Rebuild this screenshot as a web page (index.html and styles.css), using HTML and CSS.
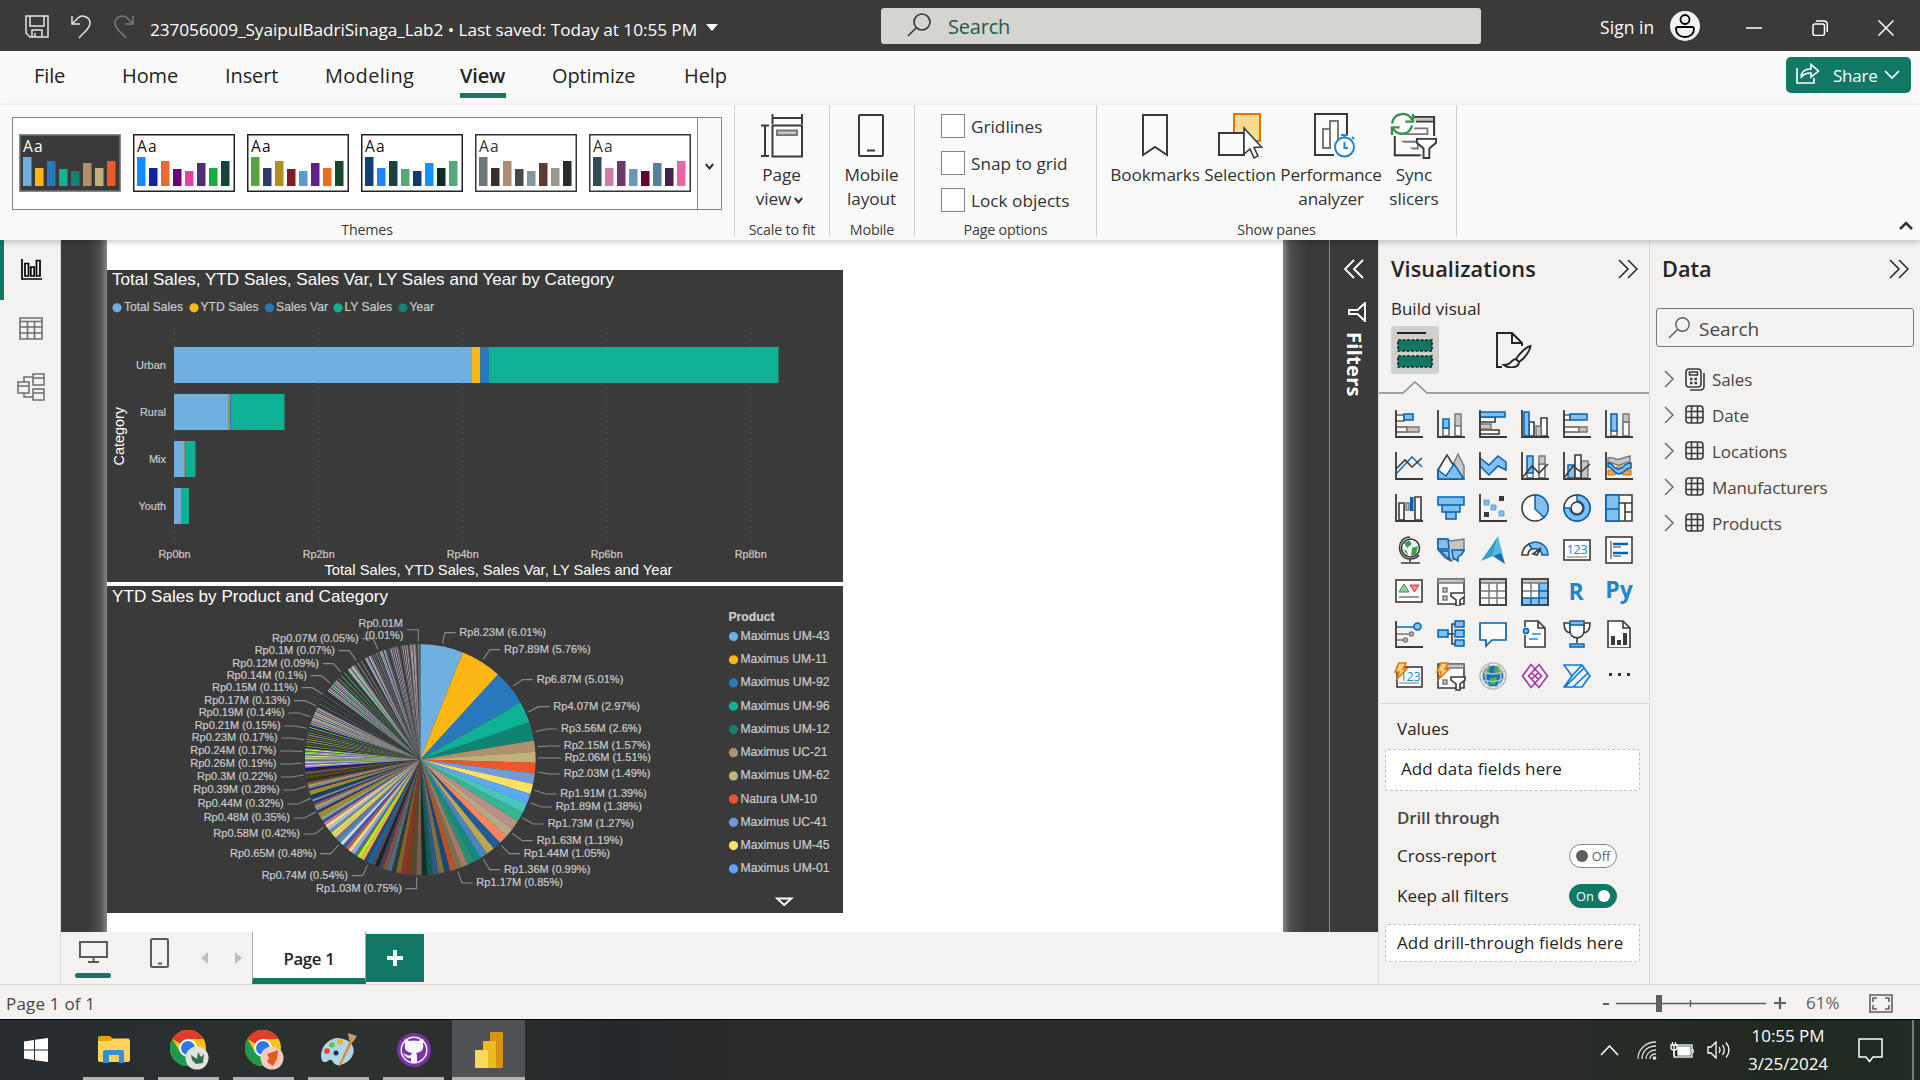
FILE: index.html
```html
<!DOCTYPE html>
<html lang="en">
<head>
<meta charset="utf-8">
<title>237056009_SyaipulBadriSinaga_Lab2</title>
<link rel="stylesheet" href="styles.css">
</head>
<body>
<div class="app">
  <header class="titlebar">
    <div class="quick">
      <svg width="24" height="24" viewBox="0 0 24 24" class="ln"><path d="M1 1H23V22H5L1 18Z M5 1V11H19V1 M7 22V15H17V22 M10 18V22"/></svg>
      <svg width="22" height="24" viewBox="0 0 22 24" class="ln"><path d="M2 1V9H10 M2 9L8 3C12-1 20 2 20 8C20 14 14 17 9 23"/></svg>
      <svg width="22" height="24" viewBox="0 0 22 24" class="ln dim"><path d="M20 1V9H12 M20 9L14 3C10-1 2 2 2 8C2 14 8 17 13 23"/></svg>
    </div>
    <div class="doc">237056009_SyaipulBadriSinaga_Lab2 • Last saved: Today at 10:55 PM</div>
    <svg class="doc-caret" width="12" height="8" viewBox="0 0 12 8"><path d="M0 0H12L6 7Z" fill="#fff"/></svg>
    <div class="top-search">
      <svg width="24" height="24" viewBox="0 0 24 24" fill="none" stroke="#3b3a39" stroke-width="1.7"><circle cx="15" cy="9" r="8"/><path d="M9.5 14.5L1 23"/></svg>
      <span>Search</span>
    </div>
    <div class="signin">Sign in</div>
    <svg class="avatar" width="30" height="30" viewBox="0 0 30 30"><circle cx="15" cy="15" r="15" fill="#f3f2f1"/><g fill="none" stroke="#000" stroke-width="1.8"><circle cx="15" cy="8.500" r="4.500"/><path d="M6 18C6 16.500 7 16 8 16H22C23 16 24 16.500 24 18C24 23 20 26 15 26C10 26 6 23 6 18Z"/></g></svg>
    <div class="winbtns">
      <svg width="16" height="16" viewBox="0 0 16 16" class="wn"><path d="M0 8H16"/></svg>
      <svg width="16" height="16" viewBox="0 0 16 16" class="wn"><rect x="1" y="4" width="11.500" height="11.500" rx="2"/><path d="M4 1H11.500C14 1 15.300 2.300 15.300 4.500V12"/></svg>
      <svg width="16" height="16" viewBox="0 0 16 16" class="wn"><path d="M.5 .5L15.500 15.500M15.500 .5L.5 15.500"/></svg>
    </div>
  </header>

  <nav class="tabs">
    <span class="tab t-file">File</span><span class="tab t-home">Home</span><span class="tab t-ins">Insert</span><span class="tab t-mod">Modeling</span><span class="tab t-view">View</span><span class="tab t-opt">Optimize</span><span class="tab t-help">Help</span>
    <button class="share"><svg width="24" height="21" viewBox="0 0 24 21" fill="none" stroke="#fff" stroke-width="1.600"><path d="M1 5V20H18V15 M5 15C5 9 9 6 15 6V1.500L22.500 8L15 14V10C10 10 7 11 5 15Z"/></svg><span>Share</span><svg width="16" height="10" viewBox="0 0 16 10" fill="none" stroke="#fff" stroke-width="1.700"><path d="M1 1L8 8L15 1"/></svg></button>
  </nav>

  <section class="ribbon">
    <div class="grp g-themes">
      <div class="gallery" id="gallery"><div class="thumbs" id="thumbs"></div><div class="more"><svg width="9" height="7" viewBox="0 0 9 7" fill="none" stroke="#333" stroke-width="2"><path d="M.8 1L4.500 5.500L8.200 1"/></svg></div></div>
      <div class="cap">Themes</div>
    </div>
    <div class="grp g-scale">
      <div class="cmd"><svg width="42" height="44" viewBox="0 0 42 44" class="ic"><path d="M11.500 0V10M41 0V10M11 4H41M0 11.500H8M0 42H8M4 12V42"/><rect x="11.500" y="11.500" width="29.500" height="31"/><rect x="16" y="16.500" width="20" height="4.500" fill="#c8c6c4" stroke="#797775"/></svg><span>Page</span><span class="l2">view<svg class="vv" width="9" height="7" viewBox="0 0 9 7" fill="none" stroke="#333" stroke-width="2"><path d="M.8 1L4.500 5.500L8.200 1"/></svg></span></div>
      <div class="cap">Scale to fit</div>
    </div>
    <div class="grp g-mobile">
      <div class="cmd"><svg width="26" height="44" viewBox="0 0 26 44" class="ic"><rect x="1" y="1" width="24" height="41" rx="1"/><path d="M9 36.500H17"/></svg><span>Mobile</span><span>layout</span></div>
      <div class="cap">Mobile</div>
    </div>
    <div class="grp g-opts">
      <div class="checks"><label><i></i>Gridlines</label><label><i></i>Snap to grid</label><label><i></i>Lock objects</label></div>
      <div class="cap">Page options</div>
    </div>
    <div class="grp g-panes">
      <div class="cmds">
        <div class="cmd c1"><svg width="26" height="44" viewBox="0 0 26 44" class="ic"><path d="M1 1H25V41L13 33L1 41Z"/></svg><span>Bookmarks</span></div>
        <div class="cmd c2"><svg width="44" height="46" viewBox="0 0 44 46" class="ic"><rect x="16" y="1" width="26" height="27" fill="#f8db8f" stroke="#e3730c"/><rect x="1" y="20" width="25" height="22"/><path d="M26 15V41L32 36L36 45L40 43L36 34.500L43.500 34Z" fill="#fff" stroke-width="1.600"/></svg><span>Selection</span></div>
        <div class="cmd c3"><svg width="42" height="46" viewBox="0 0 42 46" class="ic"><path d="M20 42H1V1H33V21"/><path d="M9 35V16H16V35ZM16 34V8H24V28" stroke="#797775"/><circle cx="30.500" cy="34" r="9.500" stroke="#1f86cf"/><path d="M27 22H34M30.500 22V25M38 24L40 26M30.500 29V35H34" stroke="#1f86cf"/></svg><span>Performance</span><span>analyzer</span></div>
        <div class="cmd c4"><svg width="48" height="48" viewBox="0 0 48 48" class="ic"><path d="M24 4H45V9H26" fill="#c8c6c4"/><path d="M45 9V24M4 24V44H32M24 16H38V22H14M10 30H28V37H10Z" stroke="#797775"/><path d="M4 24V44H30M45 4V24"/><path d="M27 27H47V31L40 37V47H34V37L27 31Z" fill="#fff"/><path d="M1 11C3-1 18-2 22 7M23 1V9H15M22 13C19 24 6 24 2 16M1 23V15H9" fill="none" stroke="#36934f" stroke-width="2.500"/></svg><span>Sync</span><span>slicers</span></div>
      </div>
      <div class="cap">Show panes</div>
    </div>
    <svg class="collapse" width="14" height="9" viewBox="0 0 14 9" fill="none" stroke="#333" stroke-width="2.600"><path d="M1 8L7 2L13 8"/></svg>
  </section>

  <main class="work">
    <aside class="rail">
      <div class="railitem on"><svg width="21" height="21" viewBox="0 0 21 21" fill="none" stroke="#000" stroke-width="1.700"><path d="M1 0V20H21M4 17V4.500H7.500V17ZM9.800 17V8H13.200V17ZM15.500 17V1.500H19V17Z"/></svg></div>
      <div class="railitem"><svg width="24" height="23" viewBox="0 0 24 23" fill="none" stroke="#706e6c" stroke-width="1.600"><path d="M1 1H23V22H1ZM1 4.500H23M1 10H23M1 16H23M8.500 4V22M15.500 4V22"/></svg></div>
      <div class="railitem"><svg width="28" height="28" viewBox="0 0 28 28" fill="none" stroke="#706e6c" stroke-width="1.500"><path d="M1 9H12V20H1ZM1 13H12M16 1H27V12H16ZM16 5H27M16 16H27V27H16ZM16 20H27M7 9V4H16M7 20V24H16"/></svg></div>
    </aside>

    <div class="center">
      <div class="canvas">
        <div class="shade left"></div>
        <div class="page">
          <svg id="bar" class="visual" width="736" height="312" viewBox="107 270 736 312"></svg>
          <svg id="pie" class="visual" width="736" height="327" viewBox="107 586 736 327"></svg>
        </div>
        <div class="shade right"></div>
      </div>
      <div class="pagetabs">
        <div class="dev"><svg width="29" height="22" viewBox="0 0 29 22" fill="none" stroke="#5c5a58" stroke-width="2"><path d="M1 1H28V16H1ZM14.500 16V20.500M9 21H20"/></svg><b></b></div>
        <svg class="ph" width="19" height="31" viewBox="0 0 19 31" fill="none" stroke="#5c5a58" stroke-width="2"><rect x="1" y="1" width="17" height="28" rx="1.500"/><path d="M8 25.500H12"/></svg>
        <svg class="ar a1" width="7" height="12" viewBox="0 0 7 12"><path d="M7 0V12L0 6Z" fill="#c2c0be"/></svg>
        <svg class="ar a2" width="7" height="12" viewBox="0 0 7 12"><path d="M0 0V12L7 6Z" fill="#c2c0be"/></svg>
        <div class="pgtab">Page 1</div>
        <div class="add"><svg width="18" height="18" viewBox="0 0 18 18"><path d="M9 1V17M1 9H17" stroke="#fff" stroke-width="4"/></svg></div>
      </div>
    </div>

    <div class="filters">
      <svg width="20" height="20" viewBox="0 0 20 20" fill="none" stroke="#fff" stroke-width="1.900"><path d="M10 1L1 10L10 19M19 1L10 10L19 19"/></svg>
      <svg class="fun" width="18" height="20" viewBox="0 0 18 20" fill="none" stroke="#fff" stroke-width="2"><path d="M17 1V19L9.500 12H1V8H9.500Z"/></svg>
      <span>Filters</span>
    </div>

    <aside class="viz">
      <div class="head"><h2>Visualizations</h2><svg width="20" height="20" viewBox="0 0 20 20" class="dbl"><path d="M1 1L10 10L1 19M10 1L19 10L10 19"/></svg></div>
      <div class="sub">Build visual</div>
      <div class="modes">
        <div class="mode on"><svg width="36" height="36" viewBox="0 0 36 36"><path d="M0 1H29" stroke="#222" stroke-width="2"/><g fill="#117865" stroke="#222" stroke-width="1.700" stroke-dasharray="3 1.500"><rect x="1" y="8" width="34" height="11"/><rect x="1" y="24" width="34" height="11"/></g></svg></div>
        <div class="mode"><svg width="36" height="36" viewBox="0 0 36 36" fill="none" stroke="#222" stroke-width="1.900"><path d="M6 35H1V1H16L26 11V14M16 1V11H26M34.500 14C30 15 23 22 20 27L23 30C28 27 34 19 34.500 14ZM20 27C15 27 16 33 8 33C13 37 23 36 23 30"/></svg></div>
      </div>
      <svg class="notch" width="270" height="13" viewBox="0 0 270 13" fill="none" stroke="#8a8886" stroke-width="1.500"><path d="M0 12H24L36 1L48 12H270"/></svg>
      <div class="icons">
        <svg viewBox="0 0 28 28"><path class="w" d="M1 5H9V11H1ZM1 17H12V22H1Z"/><path class="g" d="M12 17H24V22H12Z"/><path class="b" d="M9 4H18V10H9Z"/><path class="k" d="M1 0V27H28"/></svg>
        <svg viewBox="0 0 28 28"><path class="w" d="M6 18H12V26H6ZM18 13H24V26H18Z"/><path class="g" d="M18 4H24V16H18Z"/><path class="b" d="M6 9H12V18H6Z"/><path class="k" d="M1 0V27H28"/></svg>
        <svg viewBox="0 0 28 28"><path class="w k1" d="M1 7H16V12H1ZM1 20H20V24H1Z"/><path class="g" d="M1 14H12V19H1Z"/><path class="b" d="M1 2H26V7H1Z"/><path class="k" d="M1 0V27H28"/></svg>
        <svg viewBox="0 0 28 28"><path class="w k1" d="M8 12H13V26H8ZM20 8H26V26H20Z"/><path class="g" d="M15 16H20V26H15Z"/><path class="b" d="M3 2H8V26H3Z"/><path class="k" d="M1 0V27H28"/></svg>
        <svg viewBox="0 0 28 28"><path class="w" d="M1 5H7V10H1ZM1 17H16V22H1Z"/><path class="g" d="M16 17H24V22H16Z"/><path class="b" d="M7 4H24V10H7Z"/><path class="k" d="M1 0V27H28"/></svg>
        <svg viewBox="0 0 28 28"><path class="w" d="M6 20H12V26H6ZM18 12H24V26H18Z"/><path class="g" d="M18 4H24V12H18Z"/><path class="b" d="M6 4H12V21H6Z"/><path class="k" d="M1 0V27H28"/></svg>

        <svg viewBox="0 0 28 28"><path class="bl" d="M1 22L17 5L27 15"/><path class="k n" d="M1 17L10 8L17 15L27 6"/><path class="k" d="M1 0V27H28"/></svg>
        <svg viewBox="0 0 28 28"><path class="g" d="M12 21L21 2L27 14V27H15Z"/><path class="w k1" d="M1 18L10 3L20 19V27H1Z"/><path class="b" d="M1 18L9 24L17 12L27 27H1Z"/></svg>
        <svg viewBox="0 0 28 28"><path class="b" d="M1 6L10 13L19 4L27 10V18L19 14L10 23L1 14Z"/><path class="k" d="M1 0V27H28"/></svg>
        <svg viewBox="0 0 28 28"><path class="w" d="M6 20H12V26H6ZM18 12H24V26H18Z"/><path class="g" d="M18 4H24V12H18Z"/><path class="b" d="M6 4H12V21H6Z"/><path class="k n" d="M1 26L11 14L18 21L27 12"/><path class="k" d="M1 0V27H28"/></svg>
        <svg viewBox="0 0 28 28"><path class="b" d="M5 13H12V26H5Z"/><path class="g" d="M18 9H25V26H18Z"/><path class="w k1" d="M12 3H18V26H12Z"/><path class="k n" d="M1 26L10 14L18 20L27 12"/><path class="k" d="M1 0V27H28"/></svg>
        <svg viewBox="0 0 28 28"><path d="M3 18H9L14 13L20 18H26V23H18L14 20L9 23H3Z" fill="#f9a13a" stroke="#d86b0c"/><path class="g" d="M3 6C9 4 10 9 15 7L25 4V10C19 9 18 14 13 13C9 13 8 10 3 10Z"/><path class="b" d="M3 11C9 11 8 18 14 17C19 17 18 11 26 11V16C20 15 20 22 14 22C8 22 9 15 3 15Z"/><path class="k" d="M1 0V27H28"/></svg>

        <svg viewBox="0 0 28 28"><path class="w k1" d="M4 9H9V26H4ZM20 3H26V26H20Z"/><path class="g" d="M11 9H14V16H11Z"/><path d="M15 3H18.500V17H15Z" fill="#0063b1"/><path class="k" d="M1 0V27H28"/></svg>
        <svg viewBox="0 0 28 28"><path class="b" d="M1 3H27V11H1ZM5 11H23V18H5ZM9 18H19V25H9Z"/></svg>
        <svg viewBox="0 0 28 28"><path d="M5 6H10V11H5ZM12 11H17V16H12ZM20 17H25V22H20Z" fill="#83beec" stroke="#4a90cc" stroke-width=".8"/><path d="M20 2H25V7H20ZM5 18H10V23H5Z" fill="#3b3a39"/><path class="k" d="M1 0V27H28"/></svg>
        <svg viewBox="0 0 28 28"><circle class="w k1" cx="14" cy="14" r="13"/><path class="b" d="M14 1A13 13 0 0 1 23 23.500L14 15Z"/></svg>
        <svg viewBox="0 0 28 28"><circle class="w k1" cx="14" cy="14" r="13"/><path class="b" d="M14 1A13 13 0 1 1 1 14H7A7 7 0 1 0 14 7Z"/><circle cx="14" cy="14" r="6" fill="#f3f2f1" stroke="#3b3a39" stroke-width="1.500"/></svg>
        <svg viewBox="0 0 28 28"><path class="w k1" d="M1 1H27V27H1ZM14 9H27M20 9V27M20 18H27"/><path class="b" d="M1 1H14V15H1ZM1 15H14V27H1Z"/></svg>

        <svg viewBox="0 0 28 28"><circle class="w k1" cx="15.500" cy="12" r="9"/><path d="M9 7L14 4L17 8L12 12ZM17 12L23 10L21 18L16 20ZM8 13L12 15L13 20Z" fill="#36a04f"/><path class="k n" d="M15 1C1 1 1 22 15 23M24 19C21 23 17 23 15 23V26M6 27H25"/></svg>
        <svg viewBox="0 0 28 28"><path class="g" d="M1 3H9L14 5L27 3V15L22 20L14 25L8 22L1 14Z"/><path class="b" d="M1 3H11L12 13H1ZM15 14H27L25 18L21 21V25L16 22ZM3 15H12V21L14 25Z"/></svg>
        <svg viewBox="0 0 28 28"><path d="M19 0L2 25L14 20Z" fill="#3a9dd0"/><path d="M19 0L26 28L14 20Z" fill="#55b8dd"/><path d="M14 20L26 28L22 17Z" fill="#1270b8"/></svg>
        <svg viewBox="0 0 28 28"><path class="w k1" d="M1 19A13 13 0 0 1 8 8L11 13C8 14 7 17 7 19Z"/><path class="b" d="M8 8C17 3 27 9 27 19H21C21 15 17 12 11 13Z"/><path d="M12 18L20 12L16 19Z" class="k n" fill="#333"/></svg>
        <svg viewBox="0 0 28 28"><rect class="w k1" x="1" y="4" width="26" height="20"/><text x="14" y="18" class="num">123</text><path d="M4 21H24" stroke="#797775"/></svg>
        <svg viewBox="0 0 28 28"><rect class="w k1" x="1" y="1" width="26" height="26"/><path d="M6 5V23M8 11H16M8 20H16" stroke="#797775" stroke-width="1.500"/><path d="M8 8H23M8 17H23" stroke="#0063b1" stroke-width="2.600"/></svg>

        <svg viewBox="0 0 28 28"><rect class="w k1" x="1" y="2" width="26" height="22"/><path d="M4 14L9 6L14 14Z" fill="#8fcf9b" stroke="#36934f"/><path d="M15 7H24L19.500 14Z" fill="#f58a8a" stroke="#d13438"/><path d="M4 19H24" stroke="#797775" stroke-width="1.500"/></svg>
        <svg viewBox="0 0 28 28"><path class="w k1" d="M1 1H27V26H1Z"/><path d="M1 1H27V5H1Z" class="g k1"/><path class="g" d="M6 10H10V14H6ZM6 18H10V22H6Z"/><path class="w k1" d="M14 15H28V18L23 22V28H19V22L14 18Z"/></svg>
        <svg viewBox="0 0 28 28"><path class="w k1" d="M1 1H27V27H1Z"/><path d="M1 13H27M1 20H27M10 5V27M18 5V27" stroke="#797775" stroke-width="1.500"/><path d="M1 1H27V5H1Z" class="g k1"/><path class="k n" d="M1 1H27V27H1Z"/></svg>
        <svg viewBox="0 0 28 28"><path class="w" d="M1 1H27V27H1Z"/><path class="b" d="M18 5H27V27H1V20H18ZM18 13H27M10 20V27M18 20H27M18 20V27"/><path d="M1 13H18M10 5V20" stroke="#797775" stroke-width="1.500"/><path d="M1 1H27V5H1Z" class="g k1"/><path class="k n" d="M1 1H27V27H1Z"/></svg>
        <svg viewBox="0 0 28 28" class="ov"><text x="13" y="22" class="rp">R</text></svg>
        <svg viewBox="0 0 28 28" class="ov"><text x="14" y="20" class="rp">Py</text></svg>

        <svg viewBox="0 0 28 28"><path d="M2 14H17M2 20H11" stroke="#797775" stroke-width="1.700"/><circle class="g" cx="16.500" cy="14" r="2"/><circle class="g" cx="10.500" cy="20" r="2"/><path class="bl" d="M2 7H20"/><circle class="b" cx="22.500" cy="6.500" r="3.500"/><path class="k" d="M1 1V27H28"/></svg>
        <svg viewBox="0 0 28 28"><path class="k n" d="M11 14H17M19 4H15V24H19"/><path class="b" d="M1 10H11V17H1ZM18 1H27V7H18ZM18 10H27V17H18ZM18 20H27V26H18Z"/></svg>
        <svg viewBox="0 0 28 28"><path d="M1 3H27V20H13L7 26V20H1Z" fill="#fafafa" stroke="#0063b1" stroke-width="1.700"/></svg>
        <svg viewBox="0 0 28 28"><path class="w k1" d="M4 1H17L24 8V27H4ZM17 1V8H24"/><path d="M11 14H20M8 19H17" stroke="#2b88d8" stroke-width="1.500"/><circle cx="5" cy="11" r="4" fill="#f3f2f1"/><circle class="b" cx="5" cy="11" r="2.500"/></svg>
        <svg viewBox="0 0 28 28"><path class="w k1" d="M7 3H1C1 10 4 13 8 13M21 3H27C27 10 24 13 20 13M7 3V11C7 20 21 20 21 11V3ZM14 18V23"/><path class="b" d="M7 1H21V5H7ZM7 24H21V27H7Z"/></svg>
        <svg viewBox="0 0 28 28"><path class="w k1" d="M3 1H18L25 8V28H3ZM18 1V8H25"/><path d="M6 16H10V25H6ZM12 20H16V25H12ZM18 13H22V25H18Z" fill="#3b3a39"/></svg>

        <svg viewBox="0 0 28 28" class="ov"><rect class="w k1" x="2" y="5" width="25" height="20"/><text x="15" y="19" class="num">123</text><path d="M4 21H24" stroke="#797775"/><path d="M4 1H11L8 7H12L2 17L4 10H0Z" fill="#ffcf7a" stroke="#e3730c" stroke-width="1.500"/></svg>
        <svg viewBox="0 0 28 28" class="ov"><path class="w k1" d="M1 2H27V26H1Z"/><path d="M8 2H27V6H8Z" class="g k1"/><path class="g" d="M6 18H10V22H6Z"/><path class="w k1" d="M14 15H28V18L23 22V28H19V22L14 18Z"/><path d="M4 1H11L8 7H12L2 17L4 10H0Z" fill="#ffcf7a" stroke="#e3730c" stroke-width="1.500"/></svg>
        <svg viewBox="0 0 28 28"><circle cx="14" cy="14" r="10.500" fill="#1172c4"/><path d="M6 6L12 4L9 12L4 16ZM16 4L22 7L20 13L15 10ZM11 16L18 15L16 23L11 22Z" fill="#46b04a"/><g fill="none" stroke="#bdbbb9" stroke-width="1.500"><circle cx="14" cy="14" r="13"/><path d="M2 9C10 13 18 13 26 9M1 17C10 21 18 20 27 16M11 1C4 10 6 20 12 27M18 1C24 10 23 20 16 27"/></g></svg>
        <svg viewBox="0 0 28 28"><path d="M9.500 2H14L19 2L27 14L19 26H9.500L1 14Z" fill="#fbf6fc"/><path d="M14 7L10 2.500L1.500 14L10 25.500L14 21L7.500 14L14 7L18 2.500L26.500 14L18 25.500L14 21L20.500 14L14 7M10.500 10.500L14 14L17.500 10.500M10.500 17.500L14 14L17.500 17.500" fill="none" stroke="#a33ea8" stroke-width="1.700"/></svg>
        <svg viewBox="0 0 28 28"><path d="M1 3H19L27 14L19 25H1L9 14ZM9 14L19 3M2 25L21 6M10 25L25 11" fill="#eef6fd" stroke="#0a7ae0" stroke-width="1.700"/></svg>
        <svg viewBox="0 0 28 28"><path d="M4 11H7V14H4ZM13 11H16V14H13ZM22 11H25V14H22Z" fill="#333"/></svg>
      </div>
      <div class="wells">
        <div class="lbl">Values</div>
        <div class="well w1">Add data fields here</div>
        <div class="lbl drill">Drill through</div>
        <div class="row"><span>Cross-report</span><div class="tog"><i></i>Off</div></div>
        <div class="row"><span>Keep all filters</span><div class="tog on">On<i></i></div></div>
        <div class="well w2">Add drill-through fields here</div>
      </div>
    </aside>

    <aside class="data">
      <div class="head"><h2>Data</h2><svg width="20" height="20" viewBox="0 0 20 20" class="dbl"><path d="M1 1L10 10L1 19M10 1L19 10L10 19"/></svg></div>
      <div class="dsearch"><svg width="22" height="22" viewBox="0 0 22 22" fill="none" stroke="#605e5c" stroke-width="1.400"><circle cx="14.500" cy="7.500" r="6.700"/><path d="M9.500 12.500L1 21"/></svg><span>Search</span></div>
      <div class="tree">
        <div><svg class="ch" width="10" height="18" viewBox="0 0 10 18"><path d="M1 1L9 9L1 17"/></svg><svg class="ti" width="20" height="23" viewBox="0 0 20 23"><rect x="1" y="1" width="15" height="18" rx="3"/><path d="M4.500 4H12.500V7H4.500ZM19 5V18C19 21 17 22 15 22H5"/><path d="M5 11H7.500M9.500 11H12M5 15H7.500M9.500 15H12" stroke-width="2.500"/></svg>Sales</div>
        <div><svg class="ch" width="10" height="18" viewBox="0 0 10 18"><path d="M1 1L9 9L1 17"/></svg><svg class="ti" width="20" height="20" viewBox="0 0 20 20"><rect x="1" y="1" width="17" height="17" rx="3"/><path d="M1 6.500H18M1 12.500H18M6.500 1V18M12.500 1V18"/></svg>Date</div>
        <div><svg class="ch" width="10" height="18" viewBox="0 0 10 18"><path d="M1 1L9 9L1 17"/></svg><svg class="ti" width="20" height="20" viewBox="0 0 20 20"><rect x="1" y="1" width="17" height="17" rx="3"/><path d="M1 6.500H18M1 12.500H18M6.500 1V18M12.500 1V18"/></svg>Locations</div>
        <div><svg class="ch" width="10" height="18" viewBox="0 0 10 18"><path d="M1 1L9 9L1 17"/></svg><svg class="ti" width="20" height="20" viewBox="0 0 20 20"><rect x="1" y="1" width="17" height="17" rx="3"/><path d="M1 6.500H18M1 12.500H18M6.500 1V18M12.500 1V18"/></svg>Manufacturers</div>
        <div><svg class="ch" width="10" height="18" viewBox="0 0 10 18"><path d="M1 1L9 9L1 17"/></svg><svg class="ti" width="20" height="20" viewBox="0 0 20 20"><rect x="1" y="1" width="17" height="17" rx="3"/><path d="M1 6.500H18M1 12.500H18M6.500 1V18M12.500 1V18"/></svg>Products</div>
      </div>
    </aside>
  </main>

  <footer class="status">
    <span class="pages">Page 1 of 1</span>
    <svg class="zoombar" width="186" height="20" viewBox="1602 992 186 20" stroke="#605e5c" fill="none"><path d="M1603 1003H1609M1774 1002H1786M1780 996V1008" stroke-width="2.200"/><path d="M1616 1002.500H1766M1690.500 999V1006" stroke-width="1.400"/><path d="M1659 994V1011" stroke-width="6"/></svg>
    <span class="pct">61%</span>
    <svg class="fit" width="24" height="19" viewBox="0 0 24 19" fill="none" stroke="#605e5c" stroke-width="1.600"><path d="M1 1H23V18H1ZM4 8V4H8M16 4H20V8M20 11V15H16M8 15H4V11"/></svg>
  </footer>

  <div class="taskbar">
    <div class="tb start"><svg width="24" height="24" viewBox="0 0 24 24" fill="#fff"><path d="M0 3.500L10 2V11.500H0ZM11 1.800L24 0V11.500H11ZM0 12.500H10V22L0 20.500ZM11 12.500H24V24L11 22.200Z"/></svg></div>
    <div class="tb run"><svg width="32" height="28" viewBox="0 0 32 28"><path d="M0 2Q0 0 2 0H12L15 3V8H0Z" fill="#e8a200"/><path d="M0 5H12L15 2.500H30Q32 2.500 32 5V24Q32 26 30 26H2Q0 26 0 24Z" fill="#ffd35c"/><path d="M5 27V16Q5 14 7 14H24Q26 14 26 16V27H21V19H11V27Z" fill="#2f8fe0"/></svg></div>
    <div class="tb run"><svg width="40" height="40" viewBox="0 0 40 40"><g id="chrome"><circle cx="18" cy="18" r="18" fill="#fbc116"/><path d="M18 18L2.400 9A18 18 0 0 1 33.600 9H18Z" fill="#e33b2e"/><path d="M2.400 9L10.200 22.500L18 27L18 36A18 18 0 0 1 2.400 9Z" fill="#1f9a4a"/><circle cx="18" cy="18" r="9" fill="#fff"/><circle cx="18" cy="18" r="7" fill="#2f78ea"/></g><circle cx="27" cy="28" r="11.500" fill="#dfe3e0"/><path d="M21 25L27 29L28 22L31 27L34 24L33 33L26 34L22 30Z" fill="#2d6e50"/></svg></div>
    <div class="tb run"><svg width="40" height="40" viewBox="0 0 40 40"><use href="#chrome"/><circle cx="27" cy="28" r="11.500" fill="#f6c9c1"/><path d="M22 24L28 22L33 20L32 29L28 36L22 32L24 28Z" fill="#e55a1c"/></svg></div>
    <div class="tb run"><svg width="36" height="36" viewBox="0 0 36 36"><path d="M22 7C12 3 0 12 0 24C0 30 4 32 8 28C12 26 12 34 18 33C28 32 35 22 32 15C30 10 27 8 22 7Z" fill="#acd8ec"/><circle cx="6" cy="19" r="2.800" fill="#e8412f"/><circle cx="11" cy="13" r="2.800" fill="#6cc04a"/><circle cx="19" cy="10" r="3" fill="#f7b32b"/><circle cx="15" cy="21" r="2.500" fill="#24364a"/><path d="M17 35L29 8L32 9L20 33Z" fill="#e38a2e"/><path d="M27 1L36 4L32 10L28 8Z" fill="#c39a6a"/></svg></div>
    <div class="tb run"><svg width="34" height="34" viewBox="0 0 34 34"><circle cx="17" cy="17" r="17" fill="#7a32a8"/><path d="M14 30V25C9 26 8 22 6 21C9 20 10 24 14 22C15 21 14 21 15 20C9 19 7 16 8 11C7 8 8 6 8 6C10 6 12 8 12 8Q17 7 22 8C22 8 24 6 26 6C26 6 27 8 26 11C27 16 25 19 19 20C20 21 20 22 20 24V30A13 13 0 0 1 14 30Z" fill="#f5f5fa"/><circle cx="17" cy="17" r="12.800" fill="none" stroke="#f5f5fa" stroke-width="1.500"/></svg></div>
    <div class="tb act"><svg width="28" height="36" viewBox="0 0 28 36"><rect x="15" width="13" height="36" rx="1" fill="#d99310"/><path d="M8 10Q8 9 9 9H20Q21 9 21 10V36H8Z" fill="#ecbb1e"/><path d="M0 19Q0 18 1 18H12Q13 18 13 19V36H1Q0 36 0 35Z" fill="#f7da5c"/></svg></div>
    <div class="tray">
      <svg width="19" height="11" viewBox="0 0 19 11" class="wt"><path d="M1 10L9.500 1L18 10"/></svg>
      <svg class="wf" width="20" height="19" viewBox="0 0 20 19" fill="none" stroke="#ddd" stroke-width="1.300"><path d="M1 18C1 8 9 1 19 1M5 18C5 10 11 5 19 5M9 18C9 13 13 9 19 9M13 18C13 15 15 13 19 13"/><circle cx="17.500" cy="17" r="1.200" fill="#fff"/></svg>
      <svg class="bt" width="24" height="18" viewBox="0 0 24 18" fill="none" stroke="#fff" stroke-width="1.300"><rect x="4" y="4" width="18" height="12"/><path d="M23 8V12M1 4H7V7Q7 9 4 9Q1 9 1 7ZM2.500 1V4M5.500 1V4M4 9V15"/><rect x="8" y="6" width="12" height="8" fill="#fff"/></svg>
      <svg class="vo" width="24" height="18" viewBox="0 0 24 18" fill="none" stroke="#fff" stroke-width="1.300"><path d="M1 6H4L9 1V17L4 12H1ZM12 6Q14 9 12 12M15.500 4Q19 9 15.500 14M19 1.500Q25 9 19 16.500"/></svg>
      <div class="clock"><span>10:55 PM</span><span>3/25/2024</span></div>
      <svg class="nt" width="25" height="25" viewBox="0 0 25 25" fill="none" stroke="#fff" stroke-width="1.500"><path d="M1 1H24V19H15L11.500 23.500L8 19H1Z"/></svg>
      <i class="peek"></i>
    </div>
  </div>
</div>
<script src="charts.js"></script>
</body>
</html>
```
FILE: styles.css
```css
*{box-sizing:border-box}
body{margin:0;font-family:"Segoe UI","Open Sans",sans-serif;color:#252423;overflow:hidden}
h2{margin:0}
svg{display:block;flex:none}
.app{width:1920px;height:1080px;display:flex;flex-direction:column;background:#f3f2f1}
.titlebar{height:51px;background:#3b3a38;display:flex;align-items:center;color:#fff;flex:none}
.quick{display:flex;gap:22px;margin-left:25px;width:125px;padding-top:2px}
.quick svg:not(:first-child){margin-left:-1px}
.ln{fill:none;stroke:#e6e5e4;stroke-width:1.5}
.dim{stroke:#7b7a78}
.doc{width:547px;font-size:17.2px;letter-spacing:-.05px;white-space:nowrap;padding-top:7px}
.doc-caret{margin:5px 0 0 9px}
.top-search{margin-left:163px;width:600px;height:36px;margin-top:1px;background:#d4d4d1;border-radius:3px;display:flex;align-items:center;gap:17px;padding-left:26px;font-size:20px;letter-spacing:-.2px;color:#1c5c4e}
.top-search svg{margin-top:-2px}
.top-search span{padding-top:1px}
.signin{margin-left:119px;width:70px;font-size:17.4px;letter-spacing:.1px;padding-top:2px;white-space:nowrap}
.avatar{margin-top:1px}
.winbtns{display:flex;gap:50px;margin-left:45px;padding-top:4px}
.winbtns svg:first-child{margin-left:1px}
.wn{fill:none;stroke:#fff;stroke-width:1.5}
.tabs{height:54px;background:#fafafa;display:flex;position:relative;flex:none;font-size:20px}
.tab{height:47px;line-height:49px;white-space:nowrap;letter-spacing:-.1px}
.t-file{margin-left:34px;width:88px}.t-home{width:103px}.t-ins{width:100px}.t-mod{width:135px;letter-spacing:.3px}
.t-view{width:46px;margin-right:46px;font-weight:600;border-bottom:5px solid #117865;letter-spacing:-.2px}
.t-opt{width:132px}.t-help{width:60px}
.share{margin:6px 9px 0 auto;width:125px;height:36px;border:0;border-radius:5px;background:#117865;color:#fff;font:17px "Segoe UI","Open Sans",sans-serif;display:flex;align-items:center;padding:0 0 0 10px}
.share span{margin:0 6px 0 13px;font-weight:500;letter-spacing:-.2px}
.share svg:first-child{margin-top:-3px}
.ribbon{height:135px;background:#fafafa;display:flex;flex:none;box-shadow:0 2px 6px rgba(0,0,0,.22);z-index:2}
.grp{height:132px;border-right:1px solid #d2d0ce;display:flex;flex-direction:column;justify-content:space-between;align-items:center}
.cap{font-size:14.3px;line-height:20px;height:19px;color:#3b3a39;margin-bottom:-2px;white-space:nowrap;letter-spacing:-.2px}
.g-themes{width:735px}
.gallery{width:710px;height:93px;margin:12px 0 0 0;border:1.5px solid #868482;background:#fff;display:flex}
.g-themes .gallery{align-self:flex-start;margin-left:12px}
.thumbs{display:flex;gap:12px;align-items:center;width:685px;padding:0 0 2px 6px;border-right:1px solid #868482}
.more{flex:1;background:#fafafa;display:flex;align-items:center;justify-content:center;padding-top:6px}
.g-scale{width:95px}.g-mobile{width:85px}.g-opts{width:182px}.g-panes{width:360px}
.g-scale .cmd,.g-mobile .cmd{padding-right:1px}
.cmd{display:flex;flex-direction:column;align-items:center;font-size:17.2px;line-height:24px;padding-top:8px;color:#333;white-space:nowrap;letter-spacing:-.1px}
.cmd svg.ic{height:46px;margin-bottom:4px}
.cmd span{display:flex;align-items:center}
.cmd .l2{margin-right:4px}
.vv{margin:2px 0 0 3px}
.ic{fill:#fcfcfc;stroke:#3b3a39;stroke-width:2;overflow:visible}
.checks{display:flex;flex-direction:column;gap:13px;align-self:flex-start;margin:9px 0 0 26px;font-size:17.2px;letter-spacing:0;color:#333}
.checks label{display:flex;align-items:center;height:24px;white-space:nowrap}
.checks i{width:24px;height:24px;border:1.5px solid #868482;background:#fff;margin-right:6px}
.cmds{display:flex;align-self:stretch;padding-left:12px}
.c1{width:92px}.c2{width:78px;letter-spacing:-.1px}.c3{width:104px;letter-spacing:-.25px}.c4{width:62px}
.c3 svg{margin-left:7px}
.collapse{margin:116px 0 0 442px}
.work{height:744px;display:flex;flex:none}
.rail{width:61px;border-right:1px solid #d8d6d4}
.railitem{height:58.5px;display:flex;align-items:center;justify-content:center;padding:0 0 2px 2px}
.railitem:nth-child(1){height:60px;border-left:4px solid #117865;padding-right:3px}
.center{width:1268px;display:flex;flex-direction:column}
.canvas{height:692px;display:flex}
.shade{background:#3a3a3a}
.left{width:46px;background:linear-gradient(90deg,#3a3a3a 60%,#505050 85%,#868686)}
.right{width:46px;background:linear-gradient(270deg,#3a3a3a 50%,#505050 85%,#868686)}
.page{width:1176px;background:#fff;padding-top:30px}
.visual{background:#3a3a3a}
#bar{margin-bottom:4px}
.visual text{font-family:"Liberation Sans",Arial,sans-serif;fill:#cbcbcb;stroke:#cbcbcb;stroke-width:.2px}
.visual .ttl{fill:#fff;stroke:none}
.pagetabs{height:52px;display:flex}
.dev{margin:9px 0 0 14px;width:36px;display:flex;flex-direction:column;align-items:center;gap:10px}
.dev b{width:36px;height:5px;border-radius:3px;background:#117865}
.ph{margin:6px 0 0 39px}
.ar{margin-top:20px}
.a1{margin-left:32px}.a2{margin-left:27px}
.pgtab{margin-left:10px;width:114px;background:#fff;border:1px solid #aaa8a6;border-top:0;border-bottom:6px solid #117865;text-align:center;font-size:16.8px;font-weight:600;line-height:54px;letter-spacing:-.3px;height:52px}
.add{width:58px;height:48px;margin-top:2px;background:#117865;display:flex;align-items:center;justify-content:center}
.filters{width:49px;height:692px;background:#3a3a3a;border-left:1px solid #8e8e8e;display:flex;flex-direction:column;align-items:center;padding-top:19px;color:#fff}
.fun{margin:23px 0 0 5px}
.filters span{writing-mode:vertical-rl;font-size:20px;font-weight:700;margin-top:10px;letter-spacing:.3px;line-height:26px}
.viz{width:271px;border-left:1px solid #dcdad8}
.head{display:flex;justify-content:space-between;align-items:center;padding:13px 11px 0 12px;height:45px}
.head h2{font-size:21.7px;font-weight:600;letter-spacing:0;line-height:32px;white-space:nowrap}
.viz h2{letter-spacing:.35px}
.viz .head h2{letter-spacing:.08px}
.dbl{fill:none;stroke:#252423;stroke-width:1.5}
.sub{font-size:16.8px;font-weight:500;padding:12px 0 0 12px;height:41px;line-height:24px;letter-spacing:.1px;white-space:nowrap}
.modes{display:flex;gap:51px;padding-left:12px}
.mode{width:48px;height:48px;display:flex;align-items:center;justify-content:center;border-radius:3px}
.mode.on{background:#d2d0ce}
.notch{margin-top:7px}
.icons{display:grid;grid-template-columns:repeat(6,28px);grid-auto-rows:28px;align-content:start;gap:14px;padding:16px 0 0 16px;height:309px}
.icons svg{width:28px;height:28px}
.icons .ov,.ov{overflow:visible}
.k{fill:none;stroke:#3b3a39;stroke-width:1.8}
.n{stroke-width:1.6}
.w{fill:#fdfdfd;stroke:#605e5c;stroke-width:1.4}
.k1{stroke:#3b3a39;stroke-width:1.6}
.g{fill:#c8c6c4;stroke:#797775;stroke-width:1.4}
.b{fill:#83beec;stroke:#0063b1;stroke-width:1.5}
.bl{fill:none;stroke:#1a76c0;stroke-width:1.6}
.num{font-size:12.5px;fill:#1f86cf;text-anchor:middle;letter-spacing:-.3px}
.rp{font-size:23px;font-weight:700;fill:#1f86cb;text-anchor:middle}
.wells{border-top:1px solid #dcdad8;padding:13px 0 0 6px;font-size:17px;letter-spacing:0}
.lbl{height:32px;line-height:24px;padding-left:12px}
.well{width:255px;background:#fff;border:1.5px dashed #c4c2c0;border-radius:3px;white-space:nowrap}
.w1{height:42px;line-height:37px;padding-left:15px;margin-bottom:15px;letter-spacing:.1px}
.w2{height:38px;line-height:36px;padding-left:11px;margin-top:7px;letter-spacing:.12px}
.drill{font-weight:600;color:#484644;height:31px;letter-spacing:-.15px}
.row{display:flex;justify-content:space-between;align-items:center;height:40px;padding:0 32px 2px 12px}
.row span{margin-bottom:2px}
.tog{width:48px;height:24px;border:1.5px solid #8a8886;border-radius:12px;background:#fff;display:flex;align-items:center;justify-content:center;gap:4px;font-size:12.8px;color:#605e5c}
.tog i{width:12px;height:12px;border-radius:50%;background:#605e5c}
.tog.on{background:#117865;border-color:#117865;color:#fff}
.tog.on i{background:#fff}
.data{width:271px;border-left:1px solid #dcdad8}
.dsearch{margin:23px 0 0 6px;width:258px;height:39px;border:1.5px solid #797775;border-radius:3px;display:flex;align-items:center;gap:9px;padding-left:11px;font-size:19px;color:#484644}
.dsearch span{padding-top:2px}
.tree{padding:14px 0 0 14px;font-size:17px;color:#484644}
.tree div{height:36px;display:flex;align-items:center;letter-spacing:-.1px}
.ch{fill:none;stroke:#605e5c;stroke-width:1.3;margin-right:11px}
.ti{fill:none;stroke:#3b3a39;stroke-width:1.6;margin-right:7px}
.status{height:35px;border-top:1px solid #dcdad8;display:flex;align-items:center;font-size:17px;color:#484644;padding:2px 0 0 6px;flex:none}
.status span{white-space:nowrap}
.pages{letter-spacing:.2px}
.zoombar{margin-left:auto}
.pct{width:63px;margin-left:18px;letter-spacing:0;color:#605e5c;padding-bottom:2px}
.fit{margin-right:27px}
.taskbar{height:61px;border-top:1px solid #000;background:linear-gradient(90deg,#262c30,#2d3230 20%,#25282b 32%,#2c2d2b 48%,#2a2c2a 80%,#1f291f 93%,#222b24);display:flex;flex:none}
.tb{display:flex;align-items:center;justify-content:center;width:61px;height:60px;margin-right:14px;border-bottom:3px solid transparent;padding-top:2px}
.start{width:72px;margin-right:11px}
.run{border-bottom-color:#b4b4b2}
.run:nth-child(3) svg,.run:nth-child(4) svg{margin-left:2px}
.run:nth-child(6){margin-right:8px}
.act{width:73px;background:#4f5356;border-bottom-color:#b4b4b2;margin:0}
.tray{display:flex;align-items:center;margin-left:auto;width:320px}
.wt{fill:none;stroke:#fff;stroke-width:1.5}
.wf{margin-left:18px}.bt{margin-left:13px}.vo{margin-left:13px}
.clock{width:114px;display:flex;flex-direction:column;text-align:center;color:#fff;font-size:17px;line-height:28px;letter-spacing:-.05px}
.nt{margin-left:13px}
.peek{width:2px;height:60px;background:#777c78;margin-left:29px}
```
FILE: charts.js
```js
const NS = 'http://www.w3.org/2000/svg';
function el(parent, tag, attrs, text) {
  const e = document.createElementNS(NS, tag);
  for (const k in attrs) e.setAttribute(k, attrs[k]);
  if (text !== undefined) e.textContent = text;
  parent.appendChild(e);
  return e;
}
function label(p, x1, x2, y, size, str, extra) {
  return el(p, 'text', Object.assign({ x: x1, y: y, 'font-size': size, textLength: x2 - x1, lengthAdjust: 'spacingAndGlyphs' }, extra || {}), str);
}

/* theme gallery */
const themes = [
  ['#3a3a3a', '#fff', '#70b0e0 #fcb714 #2878bd #0eb194 #108372 #af916d #c4b07b #f15628', '#888'],
  ['#fff', '#111', '#118dff #12239e #e66c37 #6b007b #e044a7 #4b2f79 #1aab40 #15443c', '#222'],
  ['#fff', '#111', '#5aa43c #2d3a6b #ab8f22 #7f1a26 #5b97d3 #601f8c #e86f20 #154a2c', '#222'],
  ['#fff', '#111', '#143f73 #1e82ff #1a423f #57a778 #123a70 #1192ff #0a2b26 #57a778', '#222'],
  ['#fff', '#333', '#6b7877 #392d2c #b08b73 #424b50 #86969c #5f3a32 #979690 #262b2c', '#34343c'],
  ['#fff', '#333', '#34495c #c97fa8 #6b3668 #6b98b8 #66003a #56809c #46234a #ee62a8', '#34343c']
];
const tops = [23, 34, 27, 35, 37, 29, 34, 27];
themes.forEach(t => {
  const s = el(document.getElementById('thumbs'), 'svg', { width: 102, height: 58, viewBox: '0 0 102 58' });
  el(s, 'rect', { x: .75, y: .75, width: 100.5, height: 56.5, fill: t[0], stroke: t[3], 'stroke-width': 1.5 });
  el(s, 'text', { x: 4, y: 17.5, 'font-size': 15.5, fill: t[1], 'letter-spacing': 1.2 }, 'Aa');
  t[2].split(' ').forEach((c, i) => el(s, 'rect', { x: 4 + i * 12, y: tops[i], width: 8.5, height: 52 - tops[i], fill: c }));
});

/* stacked bar chart */
const bar = document.getElementById('bar');
label(bar, 112, 614, 285, 16.5, 'Total Sales, YTD Sales, Sales Var, LY Sales and Year by Category', { class: 'ttl' });
[['Total Sales', 117, 124, 183, '#70b0e0'], ['YTD Sales', 194, 200.500, 258.500, '#fcb714'], ['Sales Var', 269.300, 276, 328, '#2878bd'],
 ['LY Sales', 338, 344.500, 392, '#0eb194'], ['Year', 403, 409.500, 434, '#108372']].forEach(l => {
  el(bar, 'circle', { cx: l[1], cy: 307.800, r: 4.600, fill: l[4] });
  label(bar, l[2], l[3], 311, 12.2, l[0]);
});
[174.500, 318.700, 462.700, 606.700, 750.700].forEach((x, i) => {
  el(bar, 'path', { d: `M${x} 328V546`, stroke: '#555', 'stroke-width': 1.3, 'stroke-dasharray': '1.2 4.300' });
  label(bar, x - 16, x + 16, 558, 11.3, 'Rp' + i * 2 + 'bn');
});
const B = '#70b0e0', Y = '#fcb714', D = '#2878bd', G = '#0eb194';
[['Urban', 347, 30, [[174, 472, B], [472, 480, Y], [480, 489, D], [489, 778.500, G]]],
 ['Rural', 394, 26, [[174, 228, B], [228, 230, '#9a9070'], [230, 231, D], [231, 284.500, G]]],
 ['Mix', 441, 17, [[174, 184, B], [184, 185.300, '#9a9070'], [185.300, 195.500, G]]],
 ['Youth', 488, 27.500, [[174, 181, B], [181, 189, G]]]].forEach(r => {
  label(bar, 166 - r[2], 166, r[1] + 22, 11.3, r[0]);
  r[3].forEach(s => el(bar, 'rect', { x: s[0], y: r[1], width: s[1] - s[0], height: 36, fill: s[2] }));
});
label(bar, 0, 58.500, 0, 14.5, 'Category', { class: 'ttl', transform: 'translate(124 465.500) rotate(-90)' });
label(bar, 324.500, 672.500, 575, 15, 'Total Sales, YTD Sales, Sales Var, LY Sales and Year', { class: 'ttl' });

/* pie chart */
const pie = document.getElementById('pie'), CX = 420.300, CY = 759.600, R = 115.300;
label(pie, 112, 388, 602, 16.5, 'YTD Sales by Product and Category', { class: 'ttl' });
const named = ('#70b0e0 #fcb714 #2878bd #0eb194 #108372 #af916d #c4b07b #f15628 #709bda #ffe066 #5ca8ff #4ac5bb #37b592 #b79087 #b8a887 #f8855d #1f5b9a #c0a650 #4a84c0 #14897d #2b8e70 #a87868 #7c6f4c #bf5026 #184878 #80703a #30568a #105a50 #0a3028 #80594d ' +
  '#514a33 #7a3a18 #863434 #80681a #2f3a3f #45707f #80503c #52395a #10252f #5a4a50 #0068c0 #384858 #ffa858 #a8ff08 #607078 #8ea8f0 #ffe060 #a86070 #3858b8 #e0d8c8 #4890c8 #687890 #ffc080 #c8f050 #808890 #a8c0f8 #ffe080 #c08090 #3050a0 #a0a098').split(' ');
const first = [6.01, 5.76, 5.01, 2.97, 2.6, 1.57, 1.51, 1.49];
const curve = [[.2692, 1.46], [.33, 1.36], [.39, 1.15], [.44, .86], [.5, .75], [.574, .54], [.622, .48], [.653, .42], [.677, .35], [.696, .32], [.714, .28], [.73, .22], [.746, .19], [.761, .17], [.793, .15], [.825, .14], [.861, .14], [.908, .14], [1, .14]];
const palettes = [
  [.715, '#80a030 #c08040 #303848 #7088c0 #b8a050 #805870 #283868 #8890a0 #104878 #283840'],
  [.733, '#604010 #405010 #283050 #806040 #503040 #203020'],
  [.738, '#1010c0 #30ff10 #202028'],
  [.763, '#c0ff60 #a080d0 #e0e0a0 #6060c0 #c8c0e0 #70e040 #706090'],
  [.792, '#202050 #607010 #303828 #8090a0 #101838 #90a030'],
  [.798, '#4010a0 #40ff40 #302040'],
  [.824, '#c090c0 #a0e090 #504858 #c0d8b0 #705080 #b0b0b0'],
  [.85, '#203820 #281838 #608050 #181c28 #484058'],
  [.87, '#70ffb0 #c050b0 #405048 #c0d8c8 #505058'],
  [.89, '#204030 #404840 #60a068 #282030'],
  [.902, '#80e8d0 #c08080 #406060 #d0d8d8'],
  [.918, '#303838 #283838 #809088 #603848'],
  [.93, '#70b8f0 #c08070 #303038 #c0c8d0'],
  [.94, '#303838 #607078 #382838 #808880'],
  [.95, '#7090e0 #d0a080 #303838 #b8c0b8'],
  [.958, '#303030 #584868 #485848'],
  [.967, '#c090d0 #404840 #a8b8a0 #484058'],
  [.973, '#303030 #686070 #384038'],
  [.981, '#d0a0c8 #404840 #b0a8a8 #484058'],
  [.986, '#383038 #687068'],
  [.992, '#c898c0 #485048 #b8a8a8'],
  [.995, '#383838 #706870'],
  [1.1, '#c09890 #485850 #88b898 #404040']
].map(p => [p[0], p[1].split(' ')]);
function shareAt(p) {
  for (let i = 1; i < curve.length; i++) if (p <= curve[i][0]) {
    const a = curve[i - 1], b = curve[i];
    return a[1] + (b[1] - a[1]) * (p - a[0]) / (b[0] - a[0]);
  }
  return .05;
}
const pt = p => (CX + R * Math.sin(p * 2 * Math.PI)).toFixed(2) + ' ' + (CY - R * Math.cos(p * 2 * Math.PI)).toFixed(2);
el(pie, 'circle', { cx: CX, cy: CY, r: R, fill: '#484a4a' });
let pos = 0;
for (let n = 0; pos < .9995; n++) {
  const share = n < first.length ? first[n] : shareAt(pos);
  const end = Math.min(1, pos + share / 100);
  const set = palettes.find(p => pos < p[0])[1];
  const color = n < named.length ? named[n] : set[n % set.length];
  el(pie, 'path', { d: `M${CX} ${CY}L${pt(pos)}A${R} ${R} 0 0 1 ${pt(end)}Z`, fill: color });
  pos = end;
}

/* callouts: text, x start, x end, y centre, leader elbow x, leader tip x/y */
const right = [['8.23M (6.01%)', 238, 498, 187, 195, 188, 221], ['7.89M (5.76%)', 372, 632, 238, 329, 310, 268], ['6.87M (5.01%)', 470, 730, 328, 428, 400, 348],
  ['4.07M (2.97%)', 520, 780, 409, 475, 445, 426], ['3.56M (2.6%)', 543, 784, 475, 500, 466, 485], ['2.15M (1.57%)', 551, 811, 526, 508, 473, 530],
  ['2.06M (1.51%)', 554, 813, 562, 508, 474, 564], ['2.03M (1.49%)', 551, 811, 610, 508, 472, 606], ['1.91M (1.39%)', 541, 800, 670, 498, 463, 661],
  ['1.89M (1.38%)', 527, 786, 709, 484, 451, 698], ['1.73M (1.27%)', 503, 762, 760, 460, 427, 743], ['1.63M (1.19%)', 470, 729, 811, 427, 397, 790],
  ['1.44M (1.05%)', 431, 690, 850, 388, 364, 826], ['1.36M (0.99%)', 372, 631, 898, 329, 310, 868], ['1.17M (0.85%)', 289, 549, 938, 246, 233, 904]];
const left = [['0.07M (0.05%)', 516, 776, 205, 820, 834, 238], ['0.1M (0.07%)', 464, 705, 241, 748, 768, 271], ['0.12M (0.09%)', 397, 657, 280, 700, 722, 305],
  ['0.14M (0.1%)', 380, 621, 316, 664, 690, 339], ['0.15M (0.11%)', 336, 593, 352, 637, 668, 373], ['0.17M (0.13%)', 313, 571, 391, 615, 649, 408],
  ['0.19M (0.14%)', 296, 554, 428, 598, 632, 440], ['0.21M (0.15%)', 284, 542, 466, 586, 620, 475], ['0.23M (0.17%)', 275, 533, 502, 577, 614, 510],
  ['0.24M (0.17%)', 271, 529, 541, 573, 607, 544], ['0.26M (0.19%)', 271, 529, 580, 573, 607, 579], ['0.3M (0.22%)', 291, 531, 619, 575, 611, 615],
  ['0.39M (0.28%)', 280, 539, 658, 583, 618, 649], ['0.44M (0.32%)', 293, 551, 700, 595, 632, 685], ['0.48M (0.35%)', 311, 570, 742, 614, 648, 725],
  ['0.58M (0.42%)', 340, 600, 790, 644, 671, 772], ['0.65M (0.48%)', 390, 649, 850, 692, 716, 825], ['0.74M (0.54%)', 485, 744, 916, 788, 802, 886],
  ['1.03M (0.75%)', 648, 906, 955, 950, 950, 922]];
function callouts(rows, ox, side) {
  const X = v => ox + v / 3, V = v => 570 + v / 3;
  rows.forEach(r => {
    const dy = r[3] < 450 || r[3] > 800 ? 1 : 2;
    const near = side > 0 ? r[1] - 11 : r[2] + 11;
    el(pie, 'path', { d: `M${X(near)} ${V(r[3] + dy)}H${X(r[4])}L${X(r[5])} ${V(r[6])}`, stroke: '#8a8a8a', fill: 'none', 'stroke-width': 1.1 });
    label(pie, X(r[1]), X(r[2]), V(r[3]) + 3.6, 11.4, 'Rp' + r[0]);
  });
}
callouts(right, 380, 1);
callouts(left, 100, -1);
el(pie, 'path', { d: 'M407 629.700H418.300V641.500', stroke: '#8a8a8a', fill: 'none', 'stroke-width': 1.1 });
label(pie, 358.500, 403, 627, 11.4, 'Rp0.01M');
label(pie, 365, 403.500, 639, 11.4, '(0.01%)');

label(pie, 728.500, 774.500, 621, 12.2, 'Product', { 'font-weight': 700 });
['Maximus UM-43', 'Maximus UM-11', 'Maximus UM-92', 'Maximus UM-96', 'Maximus UM-12', 'Maximus UC-21', 'Maximus UM-62', 'Natura UM-10', 'Maximus UC-41', 'Maximus UM-45', 'Maximus UM-01'].forEach((s, i) => {
  const y = 636.500 + i * 23.230;
  el(pie, 'circle', { cx: 733.500, cy: y, r: 4.600, fill: named[i] });
  label(pie, 740.500, i === 7 ? 817 : (i === 1 || i === 5 || i === 8) ? 827.500 : 829.500, y + 3.500, 12.2, s);
});
el(pie, 'path', { d: 'M777 898.500H791.500L784.200 905Z', fill: 'none', stroke: '#fff', 'stroke-width': 1.8 });
```
